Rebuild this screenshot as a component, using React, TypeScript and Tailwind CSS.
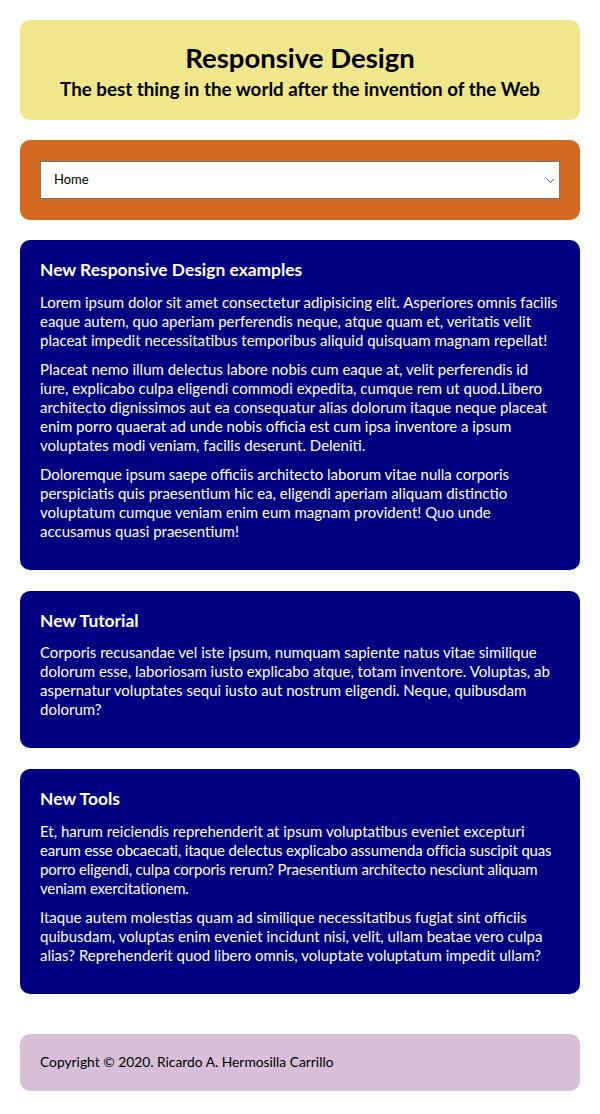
const sections = [
  {
    title: "New Responsive Design examples",
    paragraphs: [
      "Lorem ipsum dolor sit amet consectetur adipisicing elit. Asperiores omnis facilis eaque autem, quo aperiam perferendis neque, atque quam et, veritatis velit placeat impedit necessitatibus temporibus aliquid quisquam magnam repellat!",
      "Placeat nemo illum delectus labore nobis cum eaque at, velit perferendis id iure, explicabo culpa eligendi commodi expedita, cumque rem ut quod.Libero architecto dignissimos aut ea consequatur alias dolorum itaque neque placeat enim porro quaerat ad unde nobis officia est cum ipsa inventore a ipsum voluptates modi veniam, facilis deserunt. Deleniti.",
      "Doloremque ipsum saepe officiis architecto laborum vitae nulla corporis perspiciatis quis praesentium hic ea, eligendi aperiam aliquam distinctio voluptatum cumque veniam enim eum magnam provident! Quo unde accusamus quasi praesentium!",
    ],
  },
  {
    title: "New Tutorial",
    paragraphs: [
      "Corporis recusandae vel iste ipsum, numquam sapiente natus vitae similique dolorum esse, laboriosam iusto explicabo atque, totam inventore. Voluptas, ab aspernatur voluptates sequi iusto aut nostrum eligendi. Neque, quibusdam dolorum?",
    ],
  },
  {
    title: "New Tools",
    paragraphs: [
      "Et, harum reiciendis reprehenderit at ipsum voluptatibus eveniet excepturi earum esse obcaecati, itaque delectus explicabo assumenda officia suscipit quas porro eligendi, culpa corporis rerum? Praesentium architecto nesciunt aliquam veniam exercitationem.",
      "Itaque autem molestias quam ad similique necessitatibus fugiat sint officiis quibusdam, voluptas enim eveniet incidunt nisi, velit, ullam beatae vero culpa alias? Reprehenderit quod libero omnis, voluptate voluptatum impedit ullam?",
    ],
  },
]

// Lato runs a touch wider than the original font; tighten this one paragraph
// after its first line so the line breaks land where they do in the design
function Paragraph({ text, tight }: { text: string; tight?: boolean }) {
  if (!tight) return <p className="text-[15px] leading-[19px]">{text}</p>
  const cut = text.indexOf("earum")
  return (
    <p className="text-[15px] leading-[19px]">
      {text.slice(0, cut)}
      <span className="tracking-[-0.16px]">{text.slice(cut)}</span>
    </p>
  )
}

export default function App() {
  return (
    <div className="flex flex-col gap-5 px-5 pt-5 pb-5 font-['Lato',sans-serif] bg-white">
      <header className="rounded-[10px] bg-[#f0e68c] pt-[22px] pb-[20.5px] text-center text-black">
        <h1 className="text-[27.5px] leading-[32px] font-bold">Responsive Design</h1>
        <h2 className="mt-[3.5px] text-[18.75px] leading-[22px] font-bold">
          The best thing in the world after the invention of the Web
        </h2>
      </header>

      <nav className="rounded-[10px] bg-[#d2691e] px-5 py-[21px]">
        <div className="relative">
          <select
            defaultValue="home"
            className="block h-[38px] w-full appearance-none border border-[#767676] bg-white pl-[13px] text-[13px] text-black outline-none"
          >
            <option value="home">Home</option>
            <option value="about">About</option>
            <option value="contact">Contact</option>
          </select>
          <svg
            className="pointer-events-none absolute right-[5px] top-[17px]"
            width="9"
            height="6"
            viewBox="0 0 9 6"
            fill="none"
          >
            <path d="M1 1l3.5 3.5L8 1" stroke="#555" strokeWidth="1" />
          </svg>
        </div>
      </nav>

      <main className="mb-5 flex flex-col gap-[21px]">
        {sections.map((s) => (
          <section key={s.title} className="rounded-[10px] bg-[#000080] px-5 pt-[19px] pb-[29px] text-white">
            <h3 className="mb-[11.5px] text-[17.4px] leading-[22px] font-bold">{s.title}</h3>
            <div className="flex flex-col gap-[10px]">
              {s.paragraphs.map((p, i) => (
                <Paragraph key={i} text={p} tight={s.title === "New Tools" && i === 0} />
              ))}
            </div>
          </section>
        ))}
      </main>

      <footer className="rounded-[10px] bg-[#d8bfd8] px-5 pt-[19px] pb-[21px] text-[13.8px] leading-[17px] text-black">
        Copyright © 2020. Ricardo A. Hermosilla Carrillo
      </footer>
    </div>
  )
}
